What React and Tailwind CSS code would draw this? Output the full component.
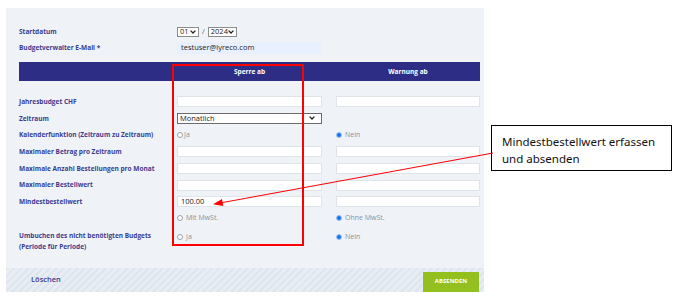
import React from 'react';

const font = { fontFamily: '"Open Sans", "Noto Sans", sans-serif' };

const Chevron = () => (
  <svg width="6" height="4" viewBox="0 0 6 4" className="shrink-0">
    <path d="M0.6 0.6 L3 3 L5.4 0.6" fill="none" stroke="#222" strokeWidth="1.3" />
  </svg>
);

const Input = ({ value }) => (
  <div className="h-[11px] bg-white border border-[#dfe4ea] flex items-center pl-[3px] text-[7.5px] text-[#222]">
    {value}
  </div>
);

const Radio = ({ checked, label, tight }) => (
  <div className={`flex items-center ${tight ? 'gap-[1px]' : 'gap-[3px]'} text-[7px] text-[#8a8f99]`}>
    {checked ? (
      <span className="w-[6px] h-[6px] rounded-full bg-[#1a73e8] border border-[#9cc1f5]" />
    ) : (
      <span className="w-[6px] h-[6px] rounded-full bg-white border border-[#9aa0a8]" />
    )}
    <span>{label}</span>
  </div>
);

const Row = ({ label, left, right }) => (
  <div className="grid grid-cols-[158px_145px_158px] h-[16.67px] items-center">
    <div className="text-[6.5px] font-bold text-[#3d3b8e] whitespace-nowrap">{label}</div>
    <div>{left}</div>
    <div className="pl-[14px]">{right}</div>
  </div>
);

export default function App() {
  return (
    <div className="relative w-[681px] h-[305px] bg-white overflow-hidden" style={font}>
      <div className="flex items-start pt-[8px] pl-[6px]">
        {/* form panel */}
        <div className="w-[478px] bg-[#eff3f8]">
          <div className="pl-[13px] pr-[4px] pt-[18px]">
            {/* Startdatum */}
            <div className="grid grid-cols-[158px_auto] items-center h-[10px]">
              <div className="text-[6.5px] font-bold text-[#3d3b8e]">Startdatum</div>
              <div className="flex items-center gap-[2px] text-[7.5px] text-[#222]">
                <div className="w-[22px] h-[10px] bg-white border border-[#8c8c8c] flex items-center justify-between px-[2px]">
                  <span>01</span>
                  <Chevron />
                </div>
                <span className="text-[#666] px-[1px]">/</span>
                <div className="w-[29px] h-[10px] bg-white border border-[#8c8c8c] flex items-center justify-between px-[2px]">
                  <span>2024</span>
                  <Chevron />
                </div>
              </div>
            </div>
            {/* Email */}
            <div className="grid grid-cols-[158px_145px] items-center h-[12px] mt-[6px]">
              <div className="text-[6.5px] font-bold text-[#3d3b8e]">Budgetverwalter E-Mail *</div>
              <div className="h-[12px] bg-[#e8f0fe] flex items-center pl-[4px] text-[7.5px] text-[#222]">
                testuser@lyreco.com
              </div>
            </div>
            {/* header */}
            <div className="grid grid-cols-[158px_145px_158px] h-[19px] items-center bg-[#2e2d85] mt-[8px] text-[6.5px] font-bold text-white">
              <div />
              <div className="text-center">Sperre ab</div>
              <div className="text-center pl-[14px]">Warnung ab</div>
            </div>

            <div className="mt-[12.5px]">
              <Row label="Jahresbudget CHF" left={<Input />} right={<Input />} />
              <Row
                label="Zeitraum"
                left={
                  <div className="h-[11px] bg-white border border-[#6b6b6b] flex items-center justify-between pl-[2px] pr-[6px] text-[7.5px] text-[#222]">
                    <span>Monatlich</span>
                    <Chevron />
                  </div>
                }
              />
              <Row
                label="Kalenderfunktion (Zeitraum zu Zeitraum)"
                left={<Radio label="Ja" tight />}
                right={<Radio checked label="Nein" />}
              />
              <Row label="Maximaler Betrag pro Zeitraum" left={<Input />} right={<Input />} />
              <Row label="Maximale Anzahl Bestellungen pro Monat" left={<Input />} right={<Input />} />
              <Row label="Maximaler Bestellwert" left={<Input />} right={<Input />} />
              <Row label="Mindestbestellwert" left={<Input value="100.00" />} right={<Input />} />
              <Row label="" left={<Radio label="Mit MwSt." />} right={<Radio checked label="Ohne MwSt." />} />
              <div className="grid grid-cols-[158px_145px_158px] items-start mt-[3px] h-[38px]">
                <div className="text-[6.5px] font-bold text-[#3d3b8e] leading-[11px]">
                  Umbuchen des nicht benötigten Budgets
                  <br />
                  (Periode für Periode)
                </div>
                <div className="pt-[2px]"><Radio label="Ja" /></div>
                <div className="pl-[14px] pt-[2px]"><Radio checked label="Nein" /></div>
              </div>
            </div>
          </div>
          {/* footer */}
          <div className="h-[24px] flex items-center justify-between pl-[25px] pr-[5px] bg-[repeating-linear-gradient(135deg,#dde5ee_0px,#dde5ee_2px,#e8edf4_2px,#e8edf4_5px)]">
            <span className="text-[7.5px] font-semibold text-[#3d3b8e]">Löschen</span>
            <div className="w-[56px] h-[20px] mt-[4px] bg-[#93c01f] flex items-center justify-center text-[6px] font-bold text-white">
              ABSENDEN
            </div>
          </div>
        </div>

        {/* annotation box */}
        <div className="ml-[7px] mt-[117px] w-[181px] h-[46px] border border-black bg-white pl-[10px] pt-[7px] text-[11.5px] leading-[17px] text-[#111]" style={{ fontFamily: '"Noto Sans", sans-serif' }}>
          Mindestbestellwert erfassen
          <br />
          und absenden
        </div>
      </div>

      {/* red highlight rectangle */}
      <div className="absolute left-[172px] top-[64px] w-[132px] h-[182px] border-2 border-[#ff0000] pointer-events-none" />

      {/* arrow */}
      <svg className="absolute left-0 top-0 pointer-events-none" width="681" height="305">
        <line x1="493" y1="153" x2="220" y2="203" stroke="#ff0000" strokeWidth="1" />
        <polygon points="213,204.3 222,199 223.2,206" fill="#ff0000" />
      </svg>
    </div>
  );
}
